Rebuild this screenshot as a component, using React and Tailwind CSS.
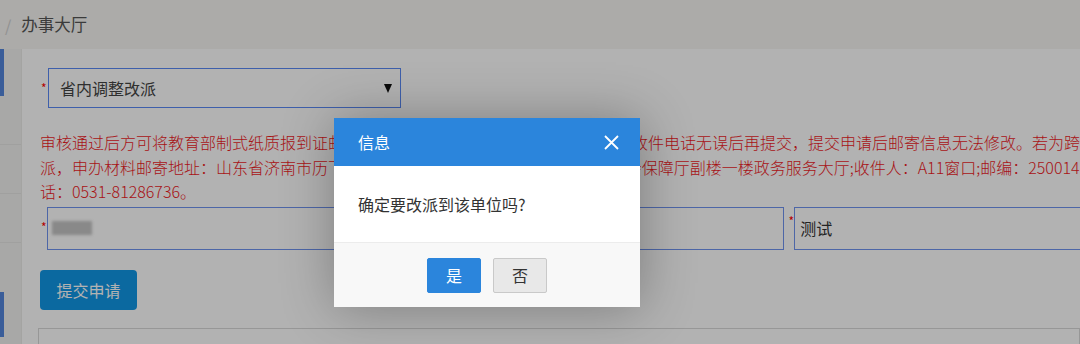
import React from "react";

const FONT = { fontFamily: '"Noto Sans CJK SC", "Liberation Sans", sans-serif' };

function Star() {
  return <span className="w-[8px] text-[12px] leading-none text-[#ff0000] self-start mt-[14px] pl-[1px]">*</span>;
}

export default function App() {
  return (
    <div className="relative w-[1080px] h-[344px] overflow-hidden bg-white" style={FONT}>
      {/* breadcrumb */}
      <div className="h-[49px] bg-[#f6f5f2] flex items-center text-[16px]">
        <span className="ml-[5px] text-[#cfcfcf]">/</span>
        <span className="ml-[10px] text-[16.5px] text-[#555]">办事大厅</span>
      </div>

      <div className="flex h-[295px]">
        {/* left strip */}
        <div className="w-[22px] bg-[#f1f1ef] flex flex-col border-r border-[#ebebe9]">
          <div className="h-[47px] w-[4px] bg-[#5386dc]" />
          <div className="h-[49px] border-b border-[#e6e6e4]" />
          <div className="h-[49px] border-b border-[#e6e6e4]" />
          <div className="h-[49px] border-b border-[#e6e6e4]" />
          <div className="h-[49px]" />
          <div className="h-[45px] w-[4px] bg-[#5386dc]" />
        </div>

        {/* panel */}
        <div className="flex-1 bg-white pl-[18px] pt-[19px] min-w-0">
          <div className="flex">
            <Star />
            <div className="w-[353px] h-[40px] border border-[#5a88f5] flex items-center justify-between pl-[11px] pr-[8px]">
              <span className="text-[16px] text-[#444]">省内调整改派</span>
              <svg width="8" height="9" viewBox="0 0 8 9">
                <path d="M0 0H8L4 9Z" fill="#111" />
              </svg>
            </div>
          </div>

          <div className="mt-[22px] text-[16px] font-light leading-[24.5px] text-[#f01a1e] whitespace-nowrap">
            <div>审核通过后方可将教育部制式纸质报到证邮寄至您填写的收件地址，请确认收件人及收件电话无误后再提交，提交申请后邮寄信息无法修改。若为跨省改派，</div>
            <div>派，申办材料邮寄地址：山东省济南市历下区经十路南段100号山东省人力资源和社会保障厅副楼一楼政务服务大厅;收件人：A11窗口;邮编：250014;电</div>
            <div>话：0531-81286736。</div>
          </div>

          <div className="flex mt-[3px]">
            <Star />
            <div className="w-[737px] h-[43px] border border-[#6f93f0] flex items-center pl-[4px] shrink-0">
              <div className="w-[40px] h-[14px] bg-[#c4c4c4] blur-[1.5px]" />
            </div>
            <div className="ml-[4px]"><Star /></div>
            <div className="w-[400px] h-[43px] border border-[#6f93f0] flex items-center pl-[5px] shrink-0">
              <span className="text-[16px] text-[#333]">测试</span>
            </div>
          </div>

          <button className="mt-[20px] w-[97px] h-[40px] rounded-[4px] bg-[#1197e5] text-white text-[16px]">
            提交申请
          </button>

          <div className="mt-[18px] -ml-[2px] h-[40px] border border-[#d8d8d8] flex text-[15px] font-bold text-[#333] whitespace-nowrap pt-[14px]">
            <span className="ml-[70px]">申请编号</span>
            <span className="ml-[90px]">申请时间</span>
            <span className="ml-[290px]">改派类型</span>
            <span className="ml-[120px]">办理状态</span>
            <span className="ml-[110px]">操作</span>
          </div>
        </div>
      </div>

      {/* overlay */}
      <div className="absolute inset-0 bg-black/30" />

      {/* dialog */}
      <div className="absolute left-[334px] top-[118px] w-[306px] bg-white shadow-[1px_1px_50px_rgba(0,0,0,0.3)]">
        <div className="h-[48px] bg-[#2b85dc] flex items-center justify-between pl-[24px] pr-[21px]">
          <span className="text-[16px] text-white">信息</span>
          <svg width="15" height="15" viewBox="0 0 15 15" fill="none" stroke="white" strokeWidth="1.8">
            <path d="M1 1L14 14M14 1L1 14" />
          </svg>
        </div>
        <div className="h-[76px] flex items-center pl-[24px] text-[16px] text-[#333]">
          确定要改派到该单位吗?
        </div>
        <div className="h-[65px] bg-[#f8f8f8] border-t border-[#ececec] flex items-center justify-center gap-[12px]">
          <button className="w-[54px] h-[35px] rounded-[2px] bg-[#2b85dc] border border-[#2b85dc] text-white text-[16px]">是</button>
          <button className="w-[54px] h-[35px] rounded-[2px] bg-[#e8e8e8] border border-[#c9c9c9] text-[#333] text-[16px]">否</button>
        </div>
      </div>
    </div>
  );
}
